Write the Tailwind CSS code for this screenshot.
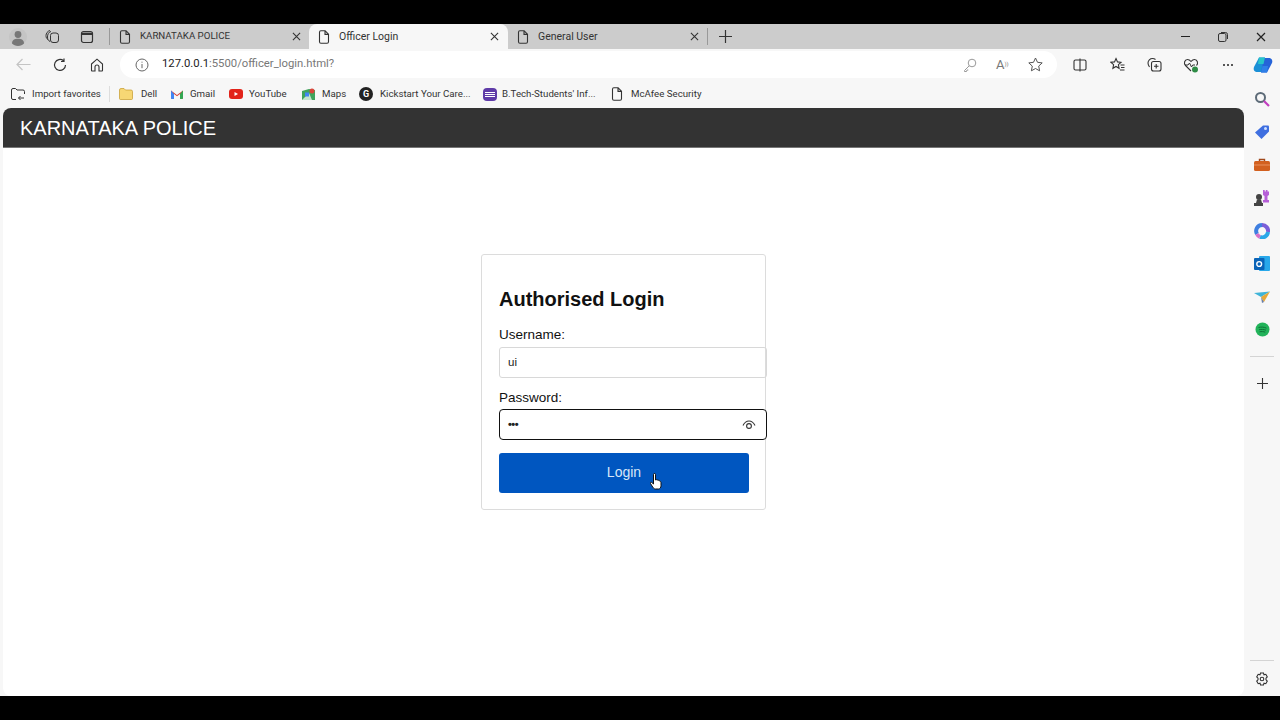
<!DOCTYPE html>
<html lang="en">
  <head>
    <meta charset="UTF-8" />
    <title>Officer Login</title>
    <script src="https://cdn.jsdelivr.net/npm/@tailwindcss/browser@4"></script>
  </head>
  <body class="bg-black h-[720px] w-[1280px] overflow-hidden flex flex-col font-['Roboto',sans-serif]">
    <svg class="hidden">
      <symbol id="doc" viewBox="0 0 12 14"><path d="M1.500 2.200a1.400 1.400 0 0 1 1.400-1.400h4.200l3.400 3.400v7.600a1.400 1.400 0 0 1-1.400 1.400H2.900a1.400 1.400 0 0 1-1.400-1.400zM7 1v3.400h3.400" fill="none" stroke="currentColor" stroke-width="1.100"/></symbol>
      <symbol id="close" viewBox="0 0 10 10"><path d="M1 1l8 8M9 1l-8 8" fill="none" stroke="currentColor" stroke-width="1.200"/></symbol>
    </svg>

    <!-- top black bar -->
    <div class="h-6 shrink-0"></div>

    <!-- tab strip -->
    <div class="h-[25px] shrink-0 bg-[#cccccc] flex items-center text-[#333] relative">
      <div class="w-9 flex justify-center">
        <svg class="w-[18px] h-[18px]" viewBox="0 0 18 18"><circle cx="9" cy="9" r="9" fill="#c4c4c4"/><circle cx="9" cy="6.500" r="3.400" fill="#777"/><path d="M3 15.500c0-3.500 2.500-4.800 6-4.800s6 1.300 6 4.800c-1.500 1.600-3.500 2.500-6 2.500s-4.500-.9-6-2.500z" fill="#777"/></svg>
      </div>
      <div class="w-[33px] flex justify-center">
        <svg class="w-[15px] h-[15px]" viewBox="0 0 15 15" fill="none" stroke="#333" stroke-width="1"><rect x="5.500" y="4" width="8" height="9.500" rx="2.500"/><path d="M5 12.500c-1.500-.8-2.500-2-2.500-4.500S3.500 3 6 2.500M3 10.500C1.500 9.500 1 8.500 1 6.500S2.500 2 5 1.500"/></svg>
      </div>
      <div class="w-9 flex justify-center">
        <svg class="w-[14px] h-[14px]" viewBox="0 0 14 14" fill="none" stroke="#333" stroke-width="1.200"><rect x="1.500" y="1.500" width="11" height="11" rx="2"/><path d="M1.500 3.800h11" stroke-width="2.400"/></svg>
      </div>
      <div class="w-px h-[17px] bg-[#999] ml-1"></div>

      <div class="w-[199px] h-full flex items-center pl-[9px] text-[9.700px]">
        <svg class="w-3 h-[14px]"><use href="#doc"/></svg>
        <span class="ml-[9px] flex-1">KARNATAKA POLICE</span>
        <svg class="w-[9px] h-[9px] mr-[8px]"><use href="#close"/></svg>
      </div>
      <div class="w-[199px] h-full flex items-center pl-[9px] text-[10.500px] bg-[#f7f7f7] rounded-t-lg">
        <svg class="w-3 h-[14px]"><use href="#doc"/></svg>
        <span class="ml-[9px] flex-1">Officer Login</span>
        <svg class="w-[9px] h-[9px] mr-[9px]"><use href="#close"/></svg>
      </div>
      <div class="w-[199px] h-full flex items-center pl-[9px] text-[10.500px]">
        <svg class="w-3 h-[14px]"><use href="#doc"/></svg>
        <span class="ml-[9px] flex-1">General User</span>
        <svg class="w-[9px] h-[9px] mr-[8px]"><use href="#close"/></svg>
      </div>
      <div class="w-px h-[17px] bg-[#999]"></div>
      <svg class="w-[13px] h-[13px] ml-[11px]" viewBox="0 0 13 13"><path d="M6.500 0v13M0 6.500h13" stroke="#333" stroke-width="1.200"/></svg>

      <div class="ml-auto flex items-center">
        <div class="w-[38px] flex justify-center"><div class="w-[9px] h-px bg-[#222]"></div></div>
        <div class="w-[38px] flex justify-center">
          <svg class="w-[10px] h-[10px]" viewBox="0 0 10 10" fill="none" stroke="#333"><rect x=".5" y="1.500" width="7.500" height="8" rx="1.500"/><path d="M3 .5h4.500a2 2 0 0 1 2 2V7"/></svg>
        </div>
        <div class="w-[38px] flex justify-center"><svg class="w-[10px] h-[10px] text-[#222]"><use href="#close"/></svg></div>
      </div>
    </div>

    <!-- toolbar -->
    <div class="h-[31px] shrink-0 bg-[#f7f7f7] flex items-center text-[#333]">
      <div class="w-[46px] flex justify-center">
        <svg class="w-[15px] h-[13px]" viewBox="0 0 15 13" fill="none" stroke="#c4c4c4" stroke-width="1.200"><path d="M14.500 6.500H1M6.500 1L1 6.500 6.500 12"/></svg>
      </div>
      <div class="w-[28px] flex justify-center">
        <svg class="w-[14px] h-[14px]" viewBox="0 0 14 14" fill="none" stroke="#333" stroke-width="1.200"><path d="M12.500 7A5.500 5.500 0 1 1 10.500 2.700M11 .5v3H8"/></svg>
      </div>
      <div class="w-[46px] flex justify-center">
        <svg class="w-[14px] h-[14px]" viewBox="0 0 14 14" fill="none" stroke="#333" stroke-width="1.100"><path d="M1.500 6L7 1.200 12.500 6v6.300a.7.7 0 0 1-.7.7H9V9a2 2 0 0 0-4 0v4H2.200a.7.7 0 0 1-.7-.7z"/></svg>
      </div>
      <div class="w-[937px] h-[27px] bg-white rounded-full flex items-center pl-[15px] pr-[14px]">
        <svg class="w-[14px] h-[14px]" viewBox="0 0 14 14" fill="none" stroke="#666"><circle cx="7" cy="7" r="6"/><path d="M7 6v4.200M7 3.700v1"/></svg>
        <span class="ml-[13px] text-[11.300px] text-[#777] flex-1"><span class="text-[#222]">127.0.0.1</span>:5500/officer_login.html?</span>
        <svg class="w-[14px] h-[14px]" viewBox="0 0 14 14" fill="none" stroke="#999"><circle cx="9" cy="5" r="3.800"/><path d="M6.200 7.800L1.500 12.500v1h2l.5-1.500h1.300"/></svg>
        <span class="ml-[19px] w-[16px] text-[13px] leading-none text-[#777]">A<sup class="text-[6px]">))</sup></span>
        <svg class="w-[15px] h-[15px] ml-[16px]" viewBox="0 0 15 15" fill="none" stroke="#555"><path d="M7.500 1l2 4.300 4.700.6-3.500 3.200.9 4.700-4.100-2.300-4.100 2.300.9-4.700L.8 5.900l4.700-.6z"/></svg>
      </div>
      <div class="w-[46px] flex justify-center">
        <svg class="w-[14px] h-[14px]" viewBox="0 0 14 14" fill="none" stroke="#333" stroke-width="1.100"><rect x="1" y="2" width="12" height="10" rx="1.500"/><path d="M7 .5v13"/></svg>
      </div>
      <div class="w-[28px] flex justify-center">
        <svg class="w-[15px] h-[15px]" viewBox="0 0 15 15" fill="none" stroke="#333" stroke-width="1.100"><path d="M6 1.500l1.500 3.400 3.500.4-2.600 2.400.7 3.600L6 9.500l-3.100 1.800.7-3.600L1 5.300l3.500-.4zM10.500 8h4M11 10.500h3.500M10 13h4.500"/></svg>
      </div>
      <div class="w-[46px] flex justify-center">
        <svg class="w-[15px] h-[15px]" viewBox="0 0 15 15" fill="none" stroke="#333" stroke-width="1.100"><rect x="4.500" y="4.500" width="9.500" height="9.500" rx="2"/><path d="M9.200 7v4.500M7 9.200h4.500M2.500 10C1.500 8.500 1 7.500 1 6c0-2.500 2-4.500 4.500-4.500 1 0 2 .2 3 1"/></svg>
      </div>
      <div class="w-[28px] flex justify-center">
        <svg class="w-4 h-4" viewBox="0 0 16 16"><path d="M8 14L2.500 8.500C.5 6.500 1.500 2.500 4.500 2.500c1.500 0 2.500.8 3.500 2 1-1.200 2-2 3.500-2 3 0 4 4 2 6" fill="none" stroke="#333" stroke-width="1.100"/><path d="M2 8h3l1.500-2 2 4 1.200-2H12" fill="none" stroke="#333"/><circle cx="12" cy="12.500" r="3" fill="#2e8b45"/></svg>
      </div>
      <div class="w-[46px] flex justify-center gap-[2px]">
        <span class="w-[2px] h-[2px] bg-[#222] rounded-full"></span><span class="w-[2px] h-[2px] bg-[#222] rounded-full"></span><span class="w-[2px] h-[2px] bg-[#222] rounded-full"></span>
      </div>
      <div class="w-[24px] flex justify-center">
        <svg class="w-5 h-5" viewBox="0 0 20 20"><path d="M6 2.500h6L9 17H4.500C1.500 17 0 15 1 12z" fill="#1a8fd6"/><path d="M14 17.500H8L11 3h4.500c3 0 4.500 2 3.500 5z" fill="#2563d8"/><path d="M6 2.500h6L10.500 9H5z" fill="#27c4c9"/><path d="M14 17.500H8L9.500 11H15z" fill="#2f7fe8"/></svg>
      </div>
    </div>

    <!-- favorites bar + page + sidebar -->
    <div class="flex-1 min-h-0 flex bg-[#f7f7f7] mb-6">
      <div class="w-[1244px] flex flex-col">
        <div class="h-[28px] shrink-0 flex items-center pl-[11px] text-[9.700px] text-[#333] whitespace-nowrap">
          <svg class="w-[14px] h-[13px]" viewBox="0 0 14 13" fill="none" stroke="#333"><path d="M5 11.500H2A1.500 1.500 0 0 1 .5 10V2A1.500 1.500 0 0 1 2 .5h2.500L6 2h6a1.500 1.500 0 0 1 1.500 1.500V6M13 10H7.500M9.500 8l-2 2 2 2"/></svg>
          <span class="ml-[7px] w-[71px] pt-px">Import favorites</span>
          <div class="w-px h-4 bg-[#ddd] ml-[6px]"></div>
          <svg class="w-[14px] h-3 ml-[9px]" viewBox="0 0 14 12"><path d="M.5 2A1.500 1.500 0 0 1 2 .5h3L6.500 2H12A1.500 1.500 0 0 1 13.500 3.500v7A1 1 0 0 1 12.500 11.500h-11a1 1 0 0 1-1-1z" fill="#f7d774" stroke="#c49a2a" stroke-width=".7"/></svg>
          <span class="ml-[8px] w-4 pt-px">Dell</span>
          <svg class="w-3 h-[10px] ml-[14px]" viewBox="0 0 12 10"><path d="M0 1.500L6 6l6-4.500V9a1 1 0 0 1-1 1H9V5L6 7.200 3 5v5H1a1 1 0 0 1-1-1z" fill="#d9453a"/><path d="M0 1.500V9a1 1 0 0 0 1 1h2V5z" fill="#4285f4"/><path d="M12 1.500V9a1 1 0 0 1-1 1H9V5z" fill="#34a853"/></svg>
          <span class="ml-[7px] w-[25px] pt-px">Gmail</span>
          <svg class="w-[14px] h-[10px] ml-[14px]" viewBox="0 0 14 10"><rect width="14" height="10" rx="3" fill="#e2231a"/><path d="M5.500 3v4L9 5z" fill="#fff"/></svg>
          <span class="ml-[6px] w-[38px] pt-px">YouTube</span>
          <svg class="w-[13px] h-[13px] ml-[15px]" viewBox="0 0 13 13"><path d="M0 3l7-2 6 1v10H0z" fill="#3fa45c"/><path d="M0 12L7 5l3 7z" fill="#fff" opacity=".7"/><path d="M3 4.500h4v4H3z" fill="#4285f4"/><circle cx="10" cy="3" r="2.500" fill="#d9453a"/></svg>
          <span class="ml-[7px] w-6 pt-px">Maps</span>
          <div class="ml-[13px] w-[14px] h-[14px] rounded-full bg-[#222] text-white text-[9px] font-bold flex items-center justify-center leading-none">G</div>
          <span class="ml-[7px] w-[90px] pt-px">Kickstart Your Care...</span>
          <div class="ml-[13px] w-[14px] h-[13px] rounded-sm bg-[#5f3ba8] flex flex-col gap-px justify-center px-[2px]">
            <span class="h-px bg-white"></span><span class="h-px bg-white"></span><span class="h-px bg-white"></span>
          </div>
          <span class="ml-[5px] w-[95px] pt-px">B.Tech-Students' Inf...</span>
          <svg class="w-3 h-[14px] ml-[14px]"><use href="#doc"/></svg>
          <span class="ml-[8px] pt-px">McAfee Security</span>
        </div>

        <!-- page viewport -->
        <div class="flex-1 ml-[3px] bg-white rounded-lg overflow-hidden flex flex-col font-['Liberation_Sans',sans-serif]">
          <header class="h-10 shrink-0 bg-[#333333] border-b border-[#777] flex items-center pl-[17px] text-white text-[20px]">KARNATAKA POLICE</header>
          <main class="flex-1 flex justify-center pt-[106px]">
            <form class="w-[285px] h-[256px] border border-[#dcdcdc] rounded-[3px] bg-white px-4 pt-[32px]">
              <h1 class="text-[20px] leading-6 font-bold text-[#111] pl-px">Authorised Login</h1>
              <label class="block mt-[15px] text-[13.500px] leading-[18px] text-[#111] pl-px">Username:</label>
              <div class="mt-[3px] ml-px w-[268px] h-[31px] border border-[#d8d8d8] rounded-[3px] pl-2 flex items-center text-[11.500px] text-[#222]">ui</div>
              <label class="block mt-[11px] text-[13.500px] leading-[18px] text-[#111] pl-px">Password:</label>
              <div class="mt-[2px] ml-px w-[268px] h-[31px] border-[1.500px] border-[#111] rounded-[4px] pl-2 pr-[10px] flex items-center justify-between bg-white">
                <span class="text-[11px] leading-none text-[#222] font-bold tracking-[-0.5px]">•••</span>
                <svg class="w-[14px] h-[10px]" viewBox="0 0 14 10" fill="none" stroke="#333" stroke-width="1.100"><path d="M1 5.500C2.500 2.500 4.500 1 7 1s4.500 1.500 6 4.500"/><circle cx="7" cy="6" r="2.400"/></svg>
              </div>
              <button type="button" class="relative mt-[13px] ml-px w-[250px] h-10 bg-[#0056c0] rounded-[3px] text-[#d7e6f7] text-[14px] pb-px">
                Login
                <svg class="absolute left-[151px] top-[20px] w-3 h-[17px]" viewBox="0 0 12 17"><path d="M3.500 1.500a1 1 0 0 1 2 0V7l1-.3 1 .3 1 .3 1 .5c.8.400 1.500.9 1.500 2v3c0 1.500-1 3.200-2.500 3.200h-3c-1.200 0-2-.8-2.700-1.800L.5 10.500c-.5-.8.500-1.700 1.300-1l1.700 1.500z" fill="#fff" stroke="#111"/></svg>
              </button>
            </form>
          </main>
        </div>
      </div>

      <!-- edge sidebar -->
      <aside class="flex-1 flex flex-col items-center pt-[11px] relative">
        <div class="w-[18px] h-[33px] flex justify-center">
          <svg class="w-4 h-4" viewBox="0 0 16 16" fill="none"><circle cx="6.500" cy="6.500" r="4.500" stroke="#5d6b78" stroke-width="2"/><path d="M10 10l5 5" stroke="#c23fc0" stroke-width="2.200"/></svg>
        </div>
        <div class="w-[18px] h-[33px] flex justify-center">
          <svg class="w-4 h-4" viewBox="0 0 16 16"><path d="M9 1.500h5a1 1 0 0 1 1 1v5L7.500 15 1 8.500z" fill="#3f6fe0"/><circle cx="11.500" cy="4.500" r="1.500" fill="#cfe0ff"/></svg>
        </div>
        <div class="w-[18px] h-[33px] flex justify-center">
          <svg class="w-4 h-4" viewBox="0 0 16 16"><path d="M5.500 4V2.500h5V4" fill="none" stroke="#a0481c" stroke-width="1.400"/><rect y="4" width="16" height="10" rx="1.500" fill="#d2601f"/><path d="M0 8h16" stroke="#f0a070" stroke-width=".8"/></svg>
        </div>
        <div class="w-[18px] h-[33px] flex justify-center">
          <svg class="w-4 h-4" viewBox="0 0 16 16"><circle cx="5" cy="7" r="3" fill="#444"/><path d="M3 9.500h4l1 3.500h1v3H0v-3h2z" fill="#444"/><path d="M9 0h1.700v1.500h1.100V0h1.700v1.500H15v3.500l-1.500 1v4H15v2.500H9V10h1.500V6L9 5z" fill="#b65fd8"/></svg>
        </div>
        <div class="w-[18px] h-[33px] flex justify-center">
          <svg class="w-4 h-4" viewBox="0 0 16 16" fill="none" stroke-width="4"><path d="M3 11A6 6 0 0 1 8 2" stroke="#3f7fe0"/><path d="M8 2a6 6 0 0 1 6 7" stroke="#7a5fd8"/><path d="M14 9a6 6 0 0 1-8 5" stroke="#2aa8e8"/><path d="M6 14a6 6 0 0 1-3-3" stroke="#d870c8"/></svg>
        </div>
        <div class="w-[18px] h-[33px] flex justify-center">
          <svg class="w-4 h-4" viewBox="0 0 16 16"><rect x="5" y="0" width="11" height="15" rx="1" fill="#28a8ea"/><rect y="2" width="10.500" height="12" rx="1" fill="#0a64b8"/><circle cx="5.200" cy="8" r="2.400" fill="none" stroke="#fff" stroke-width="1.400"/></svg>
        </div>
        <div class="w-[18px] h-[33px] flex justify-center">
          <svg class="w-4 h-4" viewBox="0 0 16 16"><path d="M0 4l16-1.500L7 8z" fill="#3fb4d8"/><path d="M16 2.500L10 13 7 8z" fill="#e8a838"/><path d="M7 8l3 5-2 1z" fill="#6a7fa8"/></svg>
        </div>
        <div class="w-[18px] h-[33px] flex justify-center">
          <svg class="w-[15px] h-[15px]" viewBox="0 0 15 15" fill="none"><circle cx="7.500" cy="7.500" r="7" fill="#22b35a"/><path d="M3.500 5.500c2.500-.7 5.500-.5 8 .6M4 7.700c2.300-.5 4.700-.4 7 .5M4.500 9.800c2-.4 4-.3 5.800.4" stroke="#0d6b33" stroke-width=".9"/></svg>
        </div>
        <div class="w-6 h-px bg-[#d4d4d4] mt-[1px]"></div>
        <svg class="w-[11px] h-[11px] mt-[21px]" viewBox="0 0 11 11"><path d="M5.500 0v11M0 5.500h11" stroke="#333" stroke-width="1.100"/></svg>
        <div class="w-6 h-px bg-[#d4d4d4] mt-auto mb-[11px]"></div>
        <svg class="w-[14px] h-[14px] mb-[10px]" viewBox="0 0 14 14" fill="none" stroke="#333" stroke-width="1.100"><path d="M5.500 1h3l.5 1.800 1.800-.5 1.500 2.600-1.300 1.300v1.600l1.300 1.300-1.500 2.600-1.800-.5L8.500 13h-3L5 11.200l-1.800.5-1.500-2.600L3 7.800V6.200L1.700 4.900l1.500-2.600 1.800.5z"/><circle cx="7" cy="7" r="1.800"/></svg>
      </aside>
    </div>
  </body>
</html>
